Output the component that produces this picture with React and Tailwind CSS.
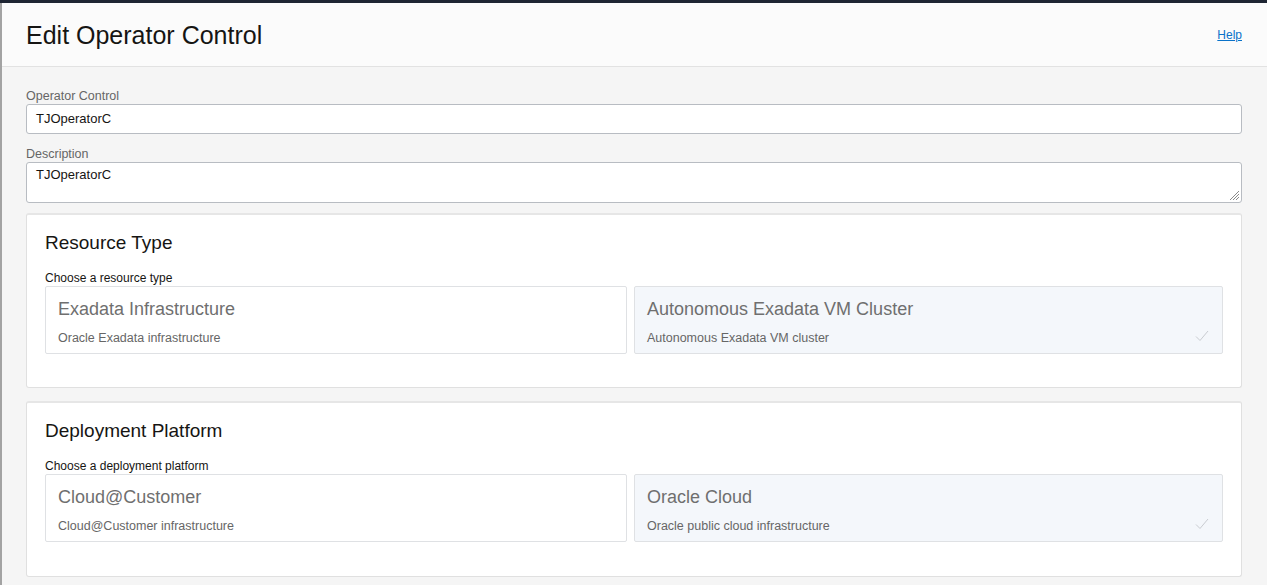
import React from "react";

function Check() {
  return (
    <svg width="14" height="12" viewBox="0 0 14 12" className="absolute right-[13px] bottom-[11px]">
      <path d="M1 6.5 L5 10.5 L13 1" fill="none" stroke="#c9ccd1" strokeWidth="1" />
    </svg>
  );
}

function Tile({ title, sub, selected }) {
  return (
    <div
      className={
        "relative h-[68px] rounded-[2px] border border-[#dfe1e4] pl-[12px] pt-[10px] " +
        (selected ? "bg-[#f4f7fb]" : "bg-white")
      }
    >
      <div className="text-[18px] leading-[24px] text-[#6f6f6f]">{title}</div>
      <div className="mt-[10px] text-[12.5px] leading-[14px] text-[#666666]">{sub}</div>
      {selected && <Check />}
    </div>
  );
}

function Section({ title, label, tiles, pb }) {
  return (
    <div className={"rounded-[3px] border border-[#e0e0e0] border-t-2 border-t-[#e6e6e6] bg-white px-[18px] pt-[16px] " + pb}>
      <div className="text-[19px] leading-[24px] text-[#161513]">{title}</div>
      <div className="mt-[16px] text-[12px] leading-[14px] text-[#161513]">{label}</div>
      <div className="mt-[1px] grid grid-cols-[582px_1fr] gap-[7px]">
        {tiles.map((t) => (
          <Tile key={t.title} {...t} />
        ))}
      </div>
    </div>
  );
}

export default function App() {
  return (
    <div
      className="min-h-[585px] w-[1267px] bg-[#f5f5f5]"
      style={{ fontFamily: '"Liberation Sans", Arial, sans-serif' }}
    >
      <div className="h-[3px] bg-[#1e2533]" />
      <div className="min-h-[582px] border-l-2 border-[#a3a3a3]">
        <div className="flex h-[64px] items-center justify-between border-b border-[#e2e2e2] bg-[#fbfbfb] pl-[24px] pr-[25px]">
          <h1 className="text-[25px] leading-[30px] text-[#161513]">Edit Operator Control</h1>
          <a href="#" className="text-[12px] text-[#0a72c9] underline">Help</a>
        </div>
        <div className="pl-[24px] pr-[25px] pt-[22px] pb-[8px]">
          <div className="text-[12.5px] leading-[14px] text-[#666666]">Operator Control</div>
          <div className="mt-[1px] flex h-[30px] items-center rounded-[3px] border border-[#b8bcc2] bg-white px-[9px] text-[13px] text-[#161513]">
            TJOperatorC
          </div>
          <div className="mt-[13px] text-[12.5px] leading-[14px] text-[#666666]">Description</div>
          <div className="relative mt-[1px] h-[41px] rounded-[3px] border border-[#b8bcc2] bg-white px-[9px] pt-[4px] text-[13px] leading-[16px] text-[#161513]">
            TJOperatorC
            <svg width="12" height="12" viewBox="0 0 12 12" className="absolute bottom-[1px] right-[1px]">
              <path d="M11 2 L2 11 M11 5 L5 11 M11 8 L8 11" stroke="#8a8a8a" strokeWidth="1" />
            </svg>
          </div>
          <div className="mt-[10px]">
            <Section
              title="Resource Type"
              label="Choose a resource type"
              pb="pb-[33px]"
              tiles={[
                { title: "Exadata Infrastructure", sub: "Oracle Exadata infrastructure" },
                { title: "Autonomous Exadata VM Cluster", sub: "Autonomous Exadata VM cluster", selected: true },
              ]}
            />
          </div>
          <div className="mt-[13px]">
            <Section
              title="Deployment Platform"
              label="Choose a deployment platform"
              pb="pb-[34px]"
              tiles={[
                { title: "Cloud@Customer", sub: "Cloud@Customer infrastructure" },
                { title: "Oracle Cloud", sub: "Oracle public cloud infrastructure", selected: true },
              ]}
            />
          </div>
        </div>
      </div>
    </div>
  );
}
